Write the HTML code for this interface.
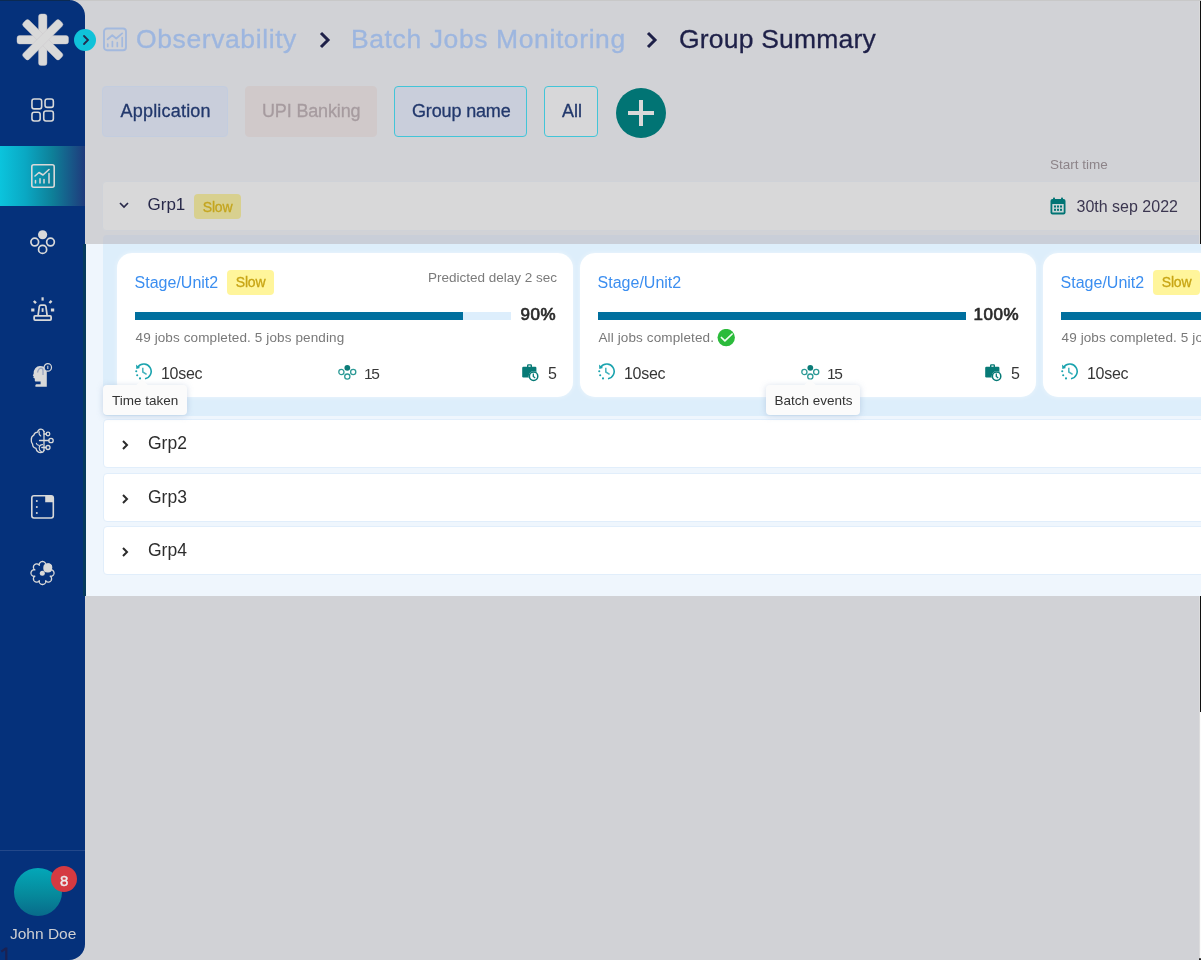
<!DOCTYPE html>
<html><head><meta charset="utf-8">
<style>
*{box-sizing:border-box;margin:0;padding:0}
html,body{width:1201px;height:960px;overflow:hidden;background:#d1d2d6;font-family:"Liberation Sans",sans-serif}
.abs{position:absolute}
.t{position:absolute;white-space:nowrap;line-height:1}
#sb{position:absolute;left:0;top:0;width:85px;height:960px;background:#05317b;border-radius:0 16px 16px 0;overflow:hidden}
.ico{position:absolute}
.chip{position:absolute;top:86px;height:51px;border-radius:4px;border:1px solid #c3cddf;background:#c9cedb}
.hl{position:absolute;left:86px;top:244px;width:1115px;height:352px;background:#eff6fd;overflow:hidden}
.card{position:absolute;width:456px;height:144px;background:#fff;border-radius:15px;box-shadow:0 0 5px rgba(255,255,255,0.5)}
.grp{position:absolute;left:17px;width:1200px;height:49px;background:#fff;border:1px solid #e1eefb;border-radius:4px}
.tip{position:absolute;height:30px;background:#fbfbfb;border-radius:4px;box-shadow:0 1px 6px rgba(120,150,190,0.35)}
.arr{position:absolute;top:-4px;width:8px;height:8px;background:#fbfbfb;transform:rotate(45deg)}
</style></head>
<body><div id="root" style="position:absolute;left:0;top:0;width:1201px;height:960px;will-change:transform">
<div class="abs" style="left:70px;top:0;width:1131px;height:1px;background:#c8c8c8"></div>
<!-- breadcrumbs -->
<svg class="abs" style="left:103px;top:27px" width="25" height="26" viewBox="0 -1 25 26" fill="none" stroke="#a3b9de" stroke-width="1.9" stroke-linecap="round" stroke-linejoin="round">
<rect x="1" y="0.55" width="22" height="21.75" rx="3"/>
<path d="M4.6 11.2 L9.25 7.3 L13.2 10.5 L19.2 5.4"/>
<path d="M4.75 16.2v2.2M9.4 13.6v4.9M14.3 14.7v3.8M19.2 9.6v8.9" stroke-width="1.7"/>
</svg>
<div class="t" style="left:136.0px;top:26.2px;font-size:26.5px;color:#9db6df;font-weight:400;letter-spacing:0.6px;-webkit-text-stroke:0.35px #9db6df">Observability</div>

<svg class="abs" style="left:318px;top:31px" width="14" height="18" viewBox="0 0 14 18"><path d="M3 2 L10 9 L3 16" fill="none" stroke="#1e2048" stroke-width="3"/></svg>
<div class="t" style="left:351.0px;top:26.2px;font-size:26.5px;color:#9db6df;font-weight:400;letter-spacing:0.6px;-webkit-text-stroke:0.35px #9db6df">Batch Jobs Monitoring</div>

<svg class="abs" style="left:645px;top:31px" width="14" height="18" viewBox="0 0 14 18"><path d="M3 2 L10 9 L3 16" fill="none" stroke="#1e2048" stroke-width="3"/></svg>
<div class="t" style="left:679.0px;top:26.2px;font-size:26.5px;color:#1e2048;font-weight:400;letter-spacing:0.2px;-webkit-text-stroke:0.3px #1e2048">Group Summary</div>


<!-- chips -->
<div class="chip" style="left:102px;width:126px"></div>
<div class="t" style="left:120.5px;top:102.4px;font-size:18px;color:#22386c;font-weight:400;letter-spacing:0.2px;-webkit-text-stroke:0.3px #22386c">Application</div>

<div class="chip" style="left:245px;width:132px;background:#d0c9ca;border-color:#d0c9ca"></div>
<div class="t" style="left:262.0px;top:102.4px;font-size:18px;color:#a69b9f;font-weight:400;letter-spacing:-0.15px;-webkit-text-stroke:0.3px #a69b9f">UPI Banking</div>

<div class="chip" style="left:394px;width:133px;border-color:#42c5d8"></div>
<div class="t" style="left:412.0px;top:102.4px;font-size:18px;color:#22386c;font-weight:400;letter-spacing:-0.15px;-webkit-text-stroke:0.3px #22386c">Group name</div>

<div class="chip" style="left:544px;width:54px;border-color:#42c5d8;background:#d7d7d9"></div>
<div class="t" style="left:562.0px;top:102.4px;font-size:18px;color:#22386c;font-weight:400;letter-spacing:0px;-webkit-text-stroke:0.3px #22386c">All</div>

<div class="abs" style="left:615.5px;top:87.5px;width:50px;height:50px;border-radius:50%;background:#017474"></div>
<div class="abs" style="left:627.8px;top:111px;width:26px;height:3.8px;background:#d9d9d9"></div>
<div class="abs" style="left:638.9px;top:100.1px;width:3.9px;height:25.6px;background:#d9d9d9"></div>

<div class="t" style="left:1050.0px;top:157.5px;font-size:13.5px;color:#8d8489;font-weight:400;letter-spacing:0px;">Start time</div>


<!-- grp1 header (under overlay) -->
<div class="abs" style="left:102px;top:181px;width:1120px;height:50px;background:#d8d8d9;border:1px solid #cfd2d8;border-radius:4px"></div>
<svg class="abs" style="left:118px;top:200px" width="12" height="10" viewBox="0 0 12 10"><path d="M2 3 L6 7 L10 3" fill="none" stroke="#28294a" stroke-width="1.7"/></svg>
<div class="t" style="left:147.5px;top:196.4px;font-size:17px;color:#28294a;font-weight:400;letter-spacing:0px;">Grp1</div>

<div class="abs" style="left:194px;top:194px;width:47px;height:24.5px;background:#d8d08f;border-radius:4px"></div>
<div class="t" style="left:202.8px;top:199.6px;font-size:14px;color:#c4a51e;font-weight:400;letter-spacing:-0.2px;-webkit-text-stroke:0.3px #c4a51e">Slow</div>

<svg class="abs" style="left:1050px;top:197px" width="16" height="18" viewBox="0 0 16 18">
<rect x="0.5" y="2" width="15" height="15.5" rx="2" fill="#017474"/>
<rect x="3" y="0.5" width="2" height="4" rx="0.8" fill="#017474"/><rect x="11" y="0.5" width="2" height="4" rx="0.8" fill="#017474"/>
<rect x="2.3" y="7" width="11.4" height="8.5" fill="#c9d5d6"/>
<g fill="#017474"><rect x="4" y="8.5" width="2" height="2"/><rect x="7" y="8.5" width="2" height="2"/><rect x="10" y="8.5" width="2" height="2"/><rect x="4" y="11.8" width="2" height="2"/><rect x="7" y="11.8" width="2" height="2"/><rect x="10" y="11.8" width="2" height="2"/></g>
</svg>
<div class="t" style="left:1076.5px;top:198.9px;font-size:16px;color:#3b3650;font-weight:400;letter-spacing:0px;">30th sep 2022</div>

<!-- expanded box under overlay -->
<div class="abs" style="left:103px;top:235px;width:1100px;height:9px;background:#c9ced8;border-radius:4px 0 0 0"></div>

<div class="hl">
<div class="abs" style="left:17px;top:-9px;width:1200px;height:181px;background:#ddeefb;border-radius:4px"></div>
<div class="card" style="left:31px;top:9px">
<div class="t" style="left:17.6px;top:22.2px;font-size:16px;color:#3b8ef0;font-weight:400;letter-spacing:0px;">Stage/Unit2</div>
<div class="abs" style="left:110px;top:16.5px;width:47px;height:25px;background:#fff59b;border-radius:4px"></div>
<div class="t" style="left:118.8px;top:22.1px;font-size:14px;color:#c8a514;font-weight:400;letter-spacing:-0.2px;-webkit-text-stroke:0.3px #c8a514">Slow</div>
<div class="t" style="right:16.0px;top:18.1px;font-size:13.5px;color:#7b7b7b;font-weight:400;letter-spacing:0px;">Predicted delay 2 sec</div>
<div class="abs" style="left:17.6px;top:59px;width:376px;height:8px;background:#ddeefc"></div>
<div class="abs" style="left:17.6px;top:59px;width:328px;height:8px;background:#006f9e"></div>
<div class="t" style="right:17.0px;top:53.4px;font-size:17px;color:#2a2a2a;font-weight:400;letter-spacing:0.5px;-webkit-text-stroke:0.7px #2a2a2a">90%</div>
<div class="t" style="left:18.5px;top:78.1px;font-size:13.5px;color:#797979;font-weight:400;letter-spacing:0.12px;">49 jobs completed. 5 jobs pending</div>
<svg class="abs" style="left:18px;top:110px" width="19" height="19" viewBox="0 0 19 19" fill="none" stroke="#1aa3ae" stroke-width="1.6">
 <path d="M2.9 3.9 A7.4 7.4 0 1 1 10.0 15.7"/>
 <polygon points="1.0,1.6 1.3,5.9 5.0,5.0" fill="#1aa3ae" stroke="none"/>
 <circle cx="1.25" cy="8.3" r="1.05" fill="#1aa3ae" stroke="none"/><circle cx="2.2" cy="12.3" r="1.05" fill="#1aa3ae" stroke="none"/><circle cx="5" cy="15.4" r="1.05" fill="#1aa3ae" stroke="none"/>
 <path d="M7.8 4.7 V9 L11.6 11.4" stroke="#45b3bd" stroke-width="1.5"/>
</svg>
<div class="t" style="left:44.0px;top:112.5px;font-size:16px;color:#363636;font-weight:400;letter-spacing:-0.3px;">10sec</div>
<svg class="abs" style="left:221px;top:111px" width="19" height="19" viewBox="0 0 19 19" fill="none" stroke="#2c9a96" stroke-width="1.3">
 <circle cx="9.3" cy="3.8" r="2.9" fill="#0b7c78" stroke="none"/>
 <circle cx="3.4" cy="8" r="2.6"/><circle cx="15.2" cy="8" r="2.6"/><circle cx="9.3" cy="12.6" r="2.6"/>
</svg>
<div class="t" style="left:247.0px;top:113.2px;font-size:15.5px;color:#383838;font-weight:400;letter-spacing:-1.3px;">15</div>
<svg class="abs" style="left:404px;top:110px" width="19" height="19" viewBox="0 0 19 19">
 <path d="M6 2.5 Q6 1.2 7.2 1.2 H9.8 Q11 1.2 11 2.5 V4 H9.6 V2.6 H7.4 V4 H6 Z" fill="#077a76"/>
 <rect x="1.2" y="3.8" width="14.2" height="10.6" rx="1.2" fill="#077a76"/>
 <circle cx="12.6" cy="13.2" r="4.9" fill="#ffffff"/>
 <circle cx="12.6" cy="13.2" r="4.2" fill="none" stroke="#077a76" stroke-width="1.5"/>
 <path d="M12.3 10.6 V13.4 L14.2 14.9" fill="none" stroke="#077a76" stroke-width="1.3"/>
</svg>
<div class="t" style="left:431.0px;top:112.5px;font-size:16px;color:#363636;font-weight:400;letter-spacing:0px;">5</div>
</div>
<div class="card" style="left:494px;top:9px">
<div class="t" style="left:17.6px;top:22.2px;font-size:16px;color:#3b8ef0;font-weight:400;letter-spacing:0px;">Stage/Unit2</div>
<div class="abs" style="left:17.6px;top:59px;width:368px;height:8px;background:#ddeefc"></div>
<div class="abs" style="left:17.6px;top:59px;width:368px;height:8px;background:#006f9e"></div>
<div class="t" style="right:17.0px;top:53.4px;font-size:17px;color:#2a2a2a;font-weight:400;letter-spacing:0.5px;-webkit-text-stroke:0.7px #2a2a2a">100%</div>
<div class="t" style="left:18.5px;top:78.1px;font-size:13.5px;color:#797979;font-weight:400;letter-spacing:0.12px;">All jobs completed.</div>
<svg class="abs" style="left:136.5px;top:76px" width="18" height="18" viewBox="0 0 18 18"><circle cx="9.2" cy="8.6" r="8.7" fill="#2bbb3b"/><path d="M4.4 8.5 L7.9 11.9 L15.1 5.0" fill="none" stroke="#f4fff4" stroke-width="1.7" stroke-linecap="round" stroke-linejoin="round"/></svg>
<svg class="abs" style="left:18px;top:110px" width="19" height="19" viewBox="0 0 19 19" fill="none" stroke="#1aa3ae" stroke-width="1.6">
 <path d="M2.9 3.9 A7.4 7.4 0 1 1 10.0 15.7"/>
 <polygon points="1.0,1.6 1.3,5.9 5.0,5.0" fill="#1aa3ae" stroke="none"/>
 <circle cx="1.25" cy="8.3" r="1.05" fill="#1aa3ae" stroke="none"/><circle cx="2.2" cy="12.3" r="1.05" fill="#1aa3ae" stroke="none"/><circle cx="5" cy="15.4" r="1.05" fill="#1aa3ae" stroke="none"/>
 <path d="M7.8 4.7 V9 L11.6 11.4" stroke="#45b3bd" stroke-width="1.5"/>
</svg>
<div class="t" style="left:44.0px;top:112.5px;font-size:16px;color:#363636;font-weight:400;letter-spacing:-0.3px;">10sec</div>
<svg class="abs" style="left:221px;top:111px" width="19" height="19" viewBox="0 0 19 19" fill="none" stroke="#2c9a96" stroke-width="1.3">
 <circle cx="9.3" cy="3.8" r="2.9" fill="#0b7c78" stroke="none"/>
 <circle cx="3.4" cy="8" r="2.6"/><circle cx="15.2" cy="8" r="2.6"/><circle cx="9.3" cy="12.6" r="2.6"/>
</svg>
<div class="t" style="left:247.0px;top:113.2px;font-size:15.5px;color:#383838;font-weight:400;letter-spacing:-1.3px;">15</div>
<svg class="abs" style="left:404px;top:110px" width="19" height="19" viewBox="0 0 19 19">
 <path d="M6 2.5 Q6 1.2 7.2 1.2 H9.8 Q11 1.2 11 2.5 V4 H9.6 V2.6 H7.4 V4 H6 Z" fill="#077a76"/>
 <rect x="1.2" y="3.8" width="14.2" height="10.6" rx="1.2" fill="#077a76"/>
 <circle cx="12.6" cy="13.2" r="4.9" fill="#ffffff"/>
 <circle cx="12.6" cy="13.2" r="4.2" fill="none" stroke="#077a76" stroke-width="1.5"/>
 <path d="M12.3 10.6 V13.4 L14.2 14.9" fill="none" stroke="#077a76" stroke-width="1.3"/>
</svg>
<div class="t" style="left:431.0px;top:112.5px;font-size:16px;color:#363636;font-weight:400;letter-spacing:0px;">5</div>
</div>
<div class="card" style="left:957px;top:9px">
<div class="t" style="left:17.6px;top:22.2px;font-size:16px;color:#3b8ef0;font-weight:400;letter-spacing:0px;">Stage/Unit2</div>
<div class="abs" style="left:110px;top:16.5px;width:47px;height:25px;background:#fff59b;border-radius:4px"></div>
<div class="t" style="left:118.8px;top:22.1px;font-size:14px;color:#c8a514;font-weight:400;letter-spacing:-0.2px;-webkit-text-stroke:0.3px #c8a514">Slow</div>
<div class="t" style="right:16.0px;top:18.1px;font-size:13.5px;color:#7b7b7b;font-weight:400;letter-spacing:0px;">Predicted delay 2 sec</div>
<div class="abs" style="left:17.6px;top:59px;width:376px;height:8px;background:#ddeefc"></div>
<div class="abs" style="left:17.6px;top:59px;width:328px;height:8px;background:#006f9e"></div>
<div class="t" style="right:17.0px;top:53.4px;font-size:17px;color:#2a2a2a;font-weight:400;letter-spacing:0.5px;-webkit-text-stroke:0.7px #2a2a2a">90%</div>
<div class="t" style="left:18.5px;top:78.1px;font-size:13.5px;color:#797979;font-weight:400;letter-spacing:0.12px;">49 jobs completed. 5 jobs pending</div>
<svg class="abs" style="left:18px;top:110px" width="19" height="19" viewBox="0 0 19 19" fill="none" stroke="#1aa3ae" stroke-width="1.6">
 <path d="M2.9 3.9 A7.4 7.4 0 1 1 10.0 15.7"/>
 <polygon points="1.0,1.6 1.3,5.9 5.0,5.0" fill="#1aa3ae" stroke="none"/>
 <circle cx="1.25" cy="8.3" r="1.05" fill="#1aa3ae" stroke="none"/><circle cx="2.2" cy="12.3" r="1.05" fill="#1aa3ae" stroke="none"/><circle cx="5" cy="15.4" r="1.05" fill="#1aa3ae" stroke="none"/>
 <path d="M7.8 4.7 V9 L11.6 11.4" stroke="#45b3bd" stroke-width="1.5"/>
</svg>
<div class="t" style="left:44.0px;top:112.5px;font-size:16px;color:#363636;font-weight:400;letter-spacing:-0.3px;">10sec</div>
<svg class="abs" style="left:221px;top:111px" width="19" height="19" viewBox="0 0 19 19" fill="none" stroke="#2c9a96" stroke-width="1.3">
 <circle cx="9.3" cy="3.8" r="2.9" fill="#0b7c78" stroke="none"/>
 <circle cx="3.4" cy="8" r="2.6"/><circle cx="15.2" cy="8" r="2.6"/><circle cx="9.3" cy="12.6" r="2.6"/>
</svg>
<div class="t" style="left:247.0px;top:113.2px;font-size:15.5px;color:#383838;font-weight:400;letter-spacing:-1.3px;">15</div>
<svg class="abs" style="left:404px;top:110px" width="19" height="19" viewBox="0 0 19 19">
 <path d="M6 2.5 Q6 1.2 7.2 1.2 H9.8 Q11 1.2 11 2.5 V4 H9.6 V2.6 H7.4 V4 H6 Z" fill="#077a76"/>
 <rect x="1.2" y="3.8" width="14.2" height="10.6" rx="1.2" fill="#077a76"/>
 <circle cx="12.6" cy="13.2" r="4.9" fill="#ffffff"/>
 <circle cx="12.6" cy="13.2" r="4.2" fill="none" stroke="#077a76" stroke-width="1.5"/>
 <path d="M12.3 10.6 V13.4 L14.2 14.9" fill="none" stroke="#077a76" stroke-width="1.3"/>
</svg>
<div class="t" style="left:431.0px;top:112.5px;font-size:16px;color:#363636;font-weight:400;letter-spacing:0px;">5</div>
</div>
<div class="grp" style="top:175px">
<svg class="abs" style="left:16px;top:18px" width="10" height="14" viewBox="0 0 10 14"><path d="M3 3 L7 7 L3 11" fill="none" stroke="#2b2b2b" stroke-width="2"/></svg>
<div class="t" style="left:44.0px;top:14.7px;font-size:17.5px;color:#2d2d2d;font-weight:400;letter-spacing:0px;">Grp2</div>
</div>
<div class="grp" style="top:229px">
<svg class="abs" style="left:16px;top:18px" width="10" height="14" viewBox="0 0 10 14"><path d="M3 3 L7 7 L3 11" fill="none" stroke="#2b2b2b" stroke-width="2"/></svg>
<div class="t" style="left:44.0px;top:14.7px;font-size:17.5px;color:#2d2d2d;font-weight:400;letter-spacing:0px;">Grp3</div>
</div>
<div class="grp" style="top:282px">
<svg class="abs" style="left:16px;top:18px" width="10" height="14" viewBox="0 0 10 14"><path d="M3 3 L7 7 L3 11" fill="none" stroke="#2b2b2b" stroke-width="2"/></svg>
<div class="t" style="left:44.0px;top:14.7px;font-size:17.5px;color:#2d2d2d;font-weight:400;letter-spacing:0px;">Grp4</div>
</div>
<div class="tip" style="left:17.299999999999997px;top:141px;width:83.6px"><div class="arr" style="left:35px"></div><div class="t" style="left:8.8px;top:9.0px;font-size:13.5px;color:#333333;font-weight:400;letter-spacing:0px;">Time taken</div>
</div>
<div class="tip" style="left:679.7px;top:141px;width:94.1px"><div class="arr" style="left:40px"></div><div class="t" style="left:8.8px;top:9.0px;font-size:13.5px;color:#333333;font-weight:400;letter-spacing:0px;">Batch events</div>
</div>
</div>


<div id="sb">
<div class="abs" style="left:0;top:0;width:70px;height:1px;background:#0b2a52"></div>
<svg class="abs" style="left:16px;top:13px" width="54" height="54" viewBox="0 0 54 54">
 <g fill="#d9d9d9" stroke="#c9c4c8" stroke-width="0.4">
 <rect x="1" y="22.55" width="51.5" height="8.4" rx="2.5"/>
 <rect x="22.55" y="1" width="8.4" height="51.5" rx="2.5"/>
 <rect x="1" y="22.55" width="51.5" height="8.4" rx="2.5" transform="rotate(45 26.75 26.75)"/>
 <rect x="1" y="22.55" width="51.5" height="8.4" rx="2.5" transform="rotate(-45 26.75 26.75)"/>
 </g>
</svg>
<!-- active band -->
<div class="abs" style="left:0;top:146px;width:85px;height:60px;background:linear-gradient(90deg,#0bc4dd 0%,#0aa8c3 30%,#0e7f98 62%,#1f3a7c 100%)"></div>
<!-- grid -->
<svg class="ico" style="left:30px;top:97px" width="26" height="26" viewBox="0 0 26 26" fill="none" stroke="#d9d9d9" stroke-width="1.6">
 <rect x="1.95" y="1.95" width="9.7" height="9.9" rx="2.2"/><rect x="15.05" y="1.95" width="8.3" height="8.4" rx="2.2"/>
 <rect x="1.95" y="15.25" width="8.2" height="8.8" rx="2.2"/><rect x="13.75" y="13.95" width="9.6" height="10.1" rx="2.2"/>
</svg>
<!-- chart -->
<svg class="ico" style="left:30px;top:163px" width="26" height="26" viewBox="0 0 26 26" fill="none" stroke="#d9d9d9" stroke-width="1.6" stroke-linecap="round" stroke-linejoin="round">
 <rect x="1.8" y="1.8" width="22.4" height="22.4" rx="2"/>
 <path d="M5 13 L9 9.5 L13 12 L19 6.5"/>
 <path d="M5.5 17.5v2.5M10 15.8v4.2M14 16.5v3.5M19 10.5v9.5" stroke-width="1.5"/>
</svg>
<!-- batch -->
<svg class="ico" style="left:30px;top:230px" width="26" height="26" viewBox="0 0 26 26" fill="none" stroke="#d9d9d9" stroke-width="1.7">
 <circle cx="12.6" cy="4.75" r="4.6" fill="#d9d9d9" stroke="none"/>
 <circle cx="4.75" cy="12.06" r="3.85"/><circle cx="20.5" cy="12.06" r="3.85"/><circle cx="12.6" cy="19.4" r="4.05"/>
</svg>
<!-- alarm -->
<svg class="ico" style="left:30px;top:296px" width="26" height="26" viewBox="0 0 26 26" fill="none" stroke="#d9d9d9">
 <rect x="4.15" y="19.9" width="16.95" height="4.2" rx="1" stroke-width="1.8"/>
 <path d="M8.1 19.3 L9.3 10.4 Q9.6 9.05 11 9.05 H14.2 Q15.6 9.05 15.9 10.4 L17.1 19.3" stroke-width="1.7"/>
 <path d="M12.6 12.2 V15.9" stroke-width="1.9"/>
 <path d="M12.6 1.3 V4.6" stroke-width="2.2"/>
 <path d="M3.8 5 L6 7.2M21.6 4.8 L19.4 7" stroke-width="2.4"/>
 <path d="M1.2 14 H4.4M20.9 14 H24.2" stroke-width="3"/>
</svg>
<!-- head -->
<svg class="ico" style="left:28px;top:358px" width="30" height="34" viewBox="0 0 30 34">
 <path d="M18.8 28.7 L7.9 28.7 Q7.1 28.7 7.3 27.8 L7.5 26.9 Q7.7 26.2 8.4 26.2 L12.6 26.2 L12.6 23.4 L7.7 23.4 Q6.8 23.4 6.8 22.5 L6.8 20.6 L5.7 19.9 Q5.1 19.5 5.5 18.8 L5.8 18.2 L5.1 17.8 Q4.6 17.4 5 16.9 L5.6 16 Q5.4 12.4 7.3 10.2 Q9.3 8 12.2 8.1 Q16.5 8.2 18.2 11 Q18.9 12.5 18.8 14.5 Z" fill="#d9d9d9"/>
 <path d="M9.5 14.5 Q10.5 10.3 13 10.2 Q15.2 10.4 15 13 L15 17" fill="none" stroke="#9aa6c0" stroke-width="1.3"/>
 <circle cx="19.8" cy="9.4" r="3.7" fill="#05317b" stroke="#d9d9d9" stroke-width="1.2"/>
 <path d="M19.8 7.7 V11.1" stroke="#d9d9d9" stroke-width="1.1"/>
</svg>
<!-- brain -->
<svg class="ico" style="left:27px;top:425px" width="30" height="32" viewBox="0 0 30 32" fill="none" stroke="#d9d9d9" stroke-width="1.3" stroke-linecap="round">
 <path d="M17 6.5 Q16 4 13.8 4.2 Q11.2 4.4 10.6 7.2 Q7.5 7.3 6.8 10.2 Q4.2 11.5 4.3 14.8 Q4 17.5 5.6 19.2 Q5.6 22.4 9 23.3 Q9.8 27.5 13.8 27.6 Q16.2 27.6 17 25.5"/>
 <path d="M17 6.5 V25.5"/>
 <path d="M12.3 6.8 Q11.3 9.5 13.8 11" stroke-width="1.1"/>
 <path d="M9.3 18.2 Q9.8 20.4 12 20.2" stroke-width="1.1"/>
 <path d="M15.6 19.6 Q12.2 19.6 12.2 23.2 Q12.4 26 14.5 26.8" stroke-width="1.1"/>
 <path d="M12.5 15.5 H21.8M17 9 H19.2M14.8 22.5 H19"/>
 <circle cx="21" cy="9" r="1.8"/><circle cx="24" cy="15.5" r="2.2"/><circle cx="21" cy="22.5" r="2"/>
</svg>
<!-- box -->
<svg class="ico" style="left:30px;top:494px" width="26" height="26" viewBox="0 0 26 26">
 <rect x="1.8" y="1.8" width="21.5" height="22.2" rx="2.2" fill="none" stroke="#d9d9d9" stroke-width="1.6"/>
 <path d="M15.2 1.8 H21.3 Q23.3 1.8 23.3 3.8 V8.2 H15.2 Z" fill="#d9d9d9"/>
 <circle cx="6.8" cy="7" r="1" fill="#d9d9d9"/><circle cx="6.8" cy="13" r="1" fill="#d9d9d9"/><circle cx="6.8" cy="18.9" r="1" fill="#d9d9d9"/>
</svg>
<!-- gear -->
<svg class="ico" style="left:27px;top:557px" width="30" height="32" viewBox="0 0 30 32">
 <path d="M27.00 16.00 L26.99 16.30 L26.94 16.60 L26.87 16.89 L26.77 17.18 L26.64 17.47 L26.48 17.74 L26.29 18.00 L26.08 18.25 L25.83 18.48 L25.56 18.69 L25.25 18.89 L24.90 19.05 L24.50 19.19 L24.02 19.27 L23.17 19.18 L23.84 19.71 L24.12 20.11 L24.30 20.49 L24.43 20.85 L24.52 21.21 L24.56 21.55 L24.57 21.89 L24.55 22.22 L24.49 22.53 L24.41 22.84 L24.31 23.13 L24.17 23.41 L24.01 23.67 L23.83 23.91 L23.63 24.13 L23.41 24.33 L23.17 24.51 L22.91 24.67 L22.63 24.81 L22.34 24.91 L22.03 24.99 L21.72 25.05 L21.39 25.07 L21.05 25.06 L20.71 25.02 L20.35 24.93 L19.99 24.80 L19.61 24.62 L19.21 24.34 L18.68 23.67 L18.77 24.52 L18.69 25.00 L18.55 25.40 L18.39 25.75 L18.19 26.06 L17.98 26.33 L17.75 26.58 L17.50 26.79 L17.24 26.98 L16.97 27.14 L16.68 27.27 L16.39 27.37 L16.10 27.44 L15.80 27.49 L15.50 27.50 L15.20 27.49 L14.90 27.44 L14.61 27.37 L14.32 27.27 L14.03 27.14 L13.76 26.98 L13.50 26.79 L13.25 26.58 L13.02 26.33 L12.81 26.06 L12.61 25.75 L12.45 25.40 L12.31 25.00 L12.23 24.52 L12.32 23.67 L11.79 24.34 L11.39 24.62 L11.01 24.80 L10.65 24.93 L10.29 25.02 L9.95 25.06 L9.61 25.07 L9.28 25.05 L8.97 24.99 L8.66 24.91 L8.37 24.81 L8.09 24.67 L7.83 24.51 L7.59 24.33 L7.37 24.13 L7.17 23.91 L6.99 23.67 L6.83 23.41 L6.69 23.13 L6.59 22.84 L6.51 22.53 L6.45 22.22 L6.43 21.89 L6.44 21.55 L6.48 21.21 L6.57 20.85 L6.70 20.49 L6.88 20.11 L7.16 19.71 L7.83 19.18 L6.98 19.27 L6.50 19.19 L6.10 19.05 L5.75 18.89 L5.44 18.69 L5.17 18.48 L4.92 18.25 L4.71 18.00 L4.52 17.74 L4.36 17.47 L4.23 17.18 L4.13 16.89 L4.06 16.60 L4.01 16.30 L4.00 16.00 L4.01 15.70 L4.06 15.40 L4.13 15.11 L4.23 14.82 L4.36 14.53 L4.52 14.26 L4.71 14.00 L4.92 13.75 L5.17 13.52 L5.44 13.31 L5.75 13.11 L6.10 12.95 L6.50 12.81 L6.98 12.73 L7.83 12.82 L7.16 12.29 L6.88 11.89 L6.70 11.51 L6.57 11.15 L6.48 10.79 L6.44 10.45 L6.43 10.11 L6.45 9.78 L6.51 9.47 L6.59 9.16 L6.69 8.87 L6.83 8.59 L6.99 8.33 L7.17 8.09 L7.37 7.87 L7.59 7.67 L7.83 7.49 L8.09 7.33 L8.37 7.19 L8.66 7.09 L8.97 7.01 L9.28 6.95 L9.61 6.93 L9.95 6.94 L10.29 6.98 L10.65 7.07 L11.01 7.20 L11.39 7.38 L11.79 7.66 L12.32 8.33 L12.23 7.48 L12.31 7.00 L12.45 6.60 L12.61 6.25 L12.81 5.94 L13.02 5.67 L13.25 5.42 L13.50 5.21 L13.76 5.02 L14.03 4.86 L14.32 4.73 L14.61 4.63 L14.90 4.56 L15.20 4.51 L15.50 4.50 L15.80 4.51 L16.10 4.56 L16.39 4.63 L16.68 4.73 L16.97 4.86 L17.24 5.02 L17.50 5.21 L17.75 5.42 L17.98 5.67 L18.19 5.94 L18.39 6.25 L18.55 6.60 L18.69 7.00 L18.77 7.48 L18.68 8.33 L19.21 7.66 L19.61 7.38 L19.99 7.20 L20.35 7.07 L20.71 6.98 L21.05 6.94 L21.39 6.93 L21.72 6.95 L22.03 7.01 L22.34 7.09 L22.63 7.19 L22.91 7.33 L23.17 7.49 L23.41 7.67 L23.63 7.87 L23.83 8.09 L24.01 8.33 L24.17 8.59 L24.31 8.87 L24.41 9.16 L24.49 9.47 L24.55 9.78 L24.57 10.11 L24.56 10.45 L24.52 10.79 L24.43 11.15 L24.30 11.51 L24.12 11.89 L23.84 12.29 L23.17 12.82 L24.02 12.73 L24.50 12.81 L24.90 12.95 L25.25 13.11 L25.56 13.31 L25.83 13.52 L26.08 13.75 L26.29 14.00 L26.48 14.26 L26.64 14.53 L26.77 14.82 L26.87 15.11 L26.94 15.40 L26.99 15.70 L27.00 16.00 Z" fill="none" stroke="#d9d9d9" stroke-width="1.3" stroke-linejoin="round"/>
 <rect x="16.3" y="6.6" width="8.8" height="8.8" rx="4" fill="#d9d9d9"/>
 <circle cx="15.3" cy="16.2" r="2.5" fill="#d9d9d9"/>
</svg>
<!-- separator -->
<div class="abs" style="left:0;top:850px;width:85px;height:1px;background:#23488a"></div>
<!-- avatar -->
<div class="abs" style="left:14px;top:867.5px;width:48px;height:48px;border-radius:50%;background:linear-gradient(180deg,#03a7b8 0%,#068a9c 55%,#086b8a 100%)"></div>
<div class="abs" style="left:51px;top:866.3px;width:26px;height:26px;border-radius:50%;background:#d53a41"></div>
<div class="t" style="left:60.0px;top:872.8px;font-size:15px;color:#ececec;font-weight:400;letter-spacing:0px;-webkit-text-stroke:0.4px #ececec">8</div>

<div class="t" style="left:10.0px;top:926.2px;font-size:15.5px;color:#cfcfd2;font-weight:400;letter-spacing:0px;">John Doe</div>

<svg class="abs" style="left:0;top:946px" width="12" height="14" viewBox="0 0 12 14"><path d="M1.3 5.6 L5.5 2.6 H6.3 V14" fill="none" stroke="#1b2152" stroke-width="2.2" stroke-linejoin="miter"/></svg>
</div>

<!-- toggle -->
<div class="abs" style="left:74.2px;top:28.6px;width:22px;height:22px;border-radius:50%;background:#10c2d9"></div>
<svg class="abs" style="left:80px;top:33px" width="12" height="14" viewBox="0 0 12 14"><path d="M4 3 L8 7 L4 11" fill="none" stroke="#232a4e" stroke-width="1.8" stroke-linecap="round"/></svg>
<!-- right edge artifact -->
<div class="abs" style="left:1200px;top:1px;width:1px;height:243px;background:#111"></div>
<div class="abs" style="left:1199px;top:1px;width:1px;height:243px;background:#dadada"></div>
<div class="abs" style="left:1200px;top:596px;width:1px;height:116px;background:#111"></div>
<div class="abs" style="left:1199px;top:596px;width:1px;height:364px;background:#dcdcdd"></div>
<div class="abs" style="left:1200px;top:712px;width:1px;height:248px;background:#fbfbfb"></div>
<div class="abs" style="left:1199px;top:958px;width:2px;height:2px;background:#222;border-radius:1px 1px 0 0"></div>
<div class="abs" style="left:83px;top:244px;width:3px;height:352px;background:#053a5e"></div>
</div></body></html>
